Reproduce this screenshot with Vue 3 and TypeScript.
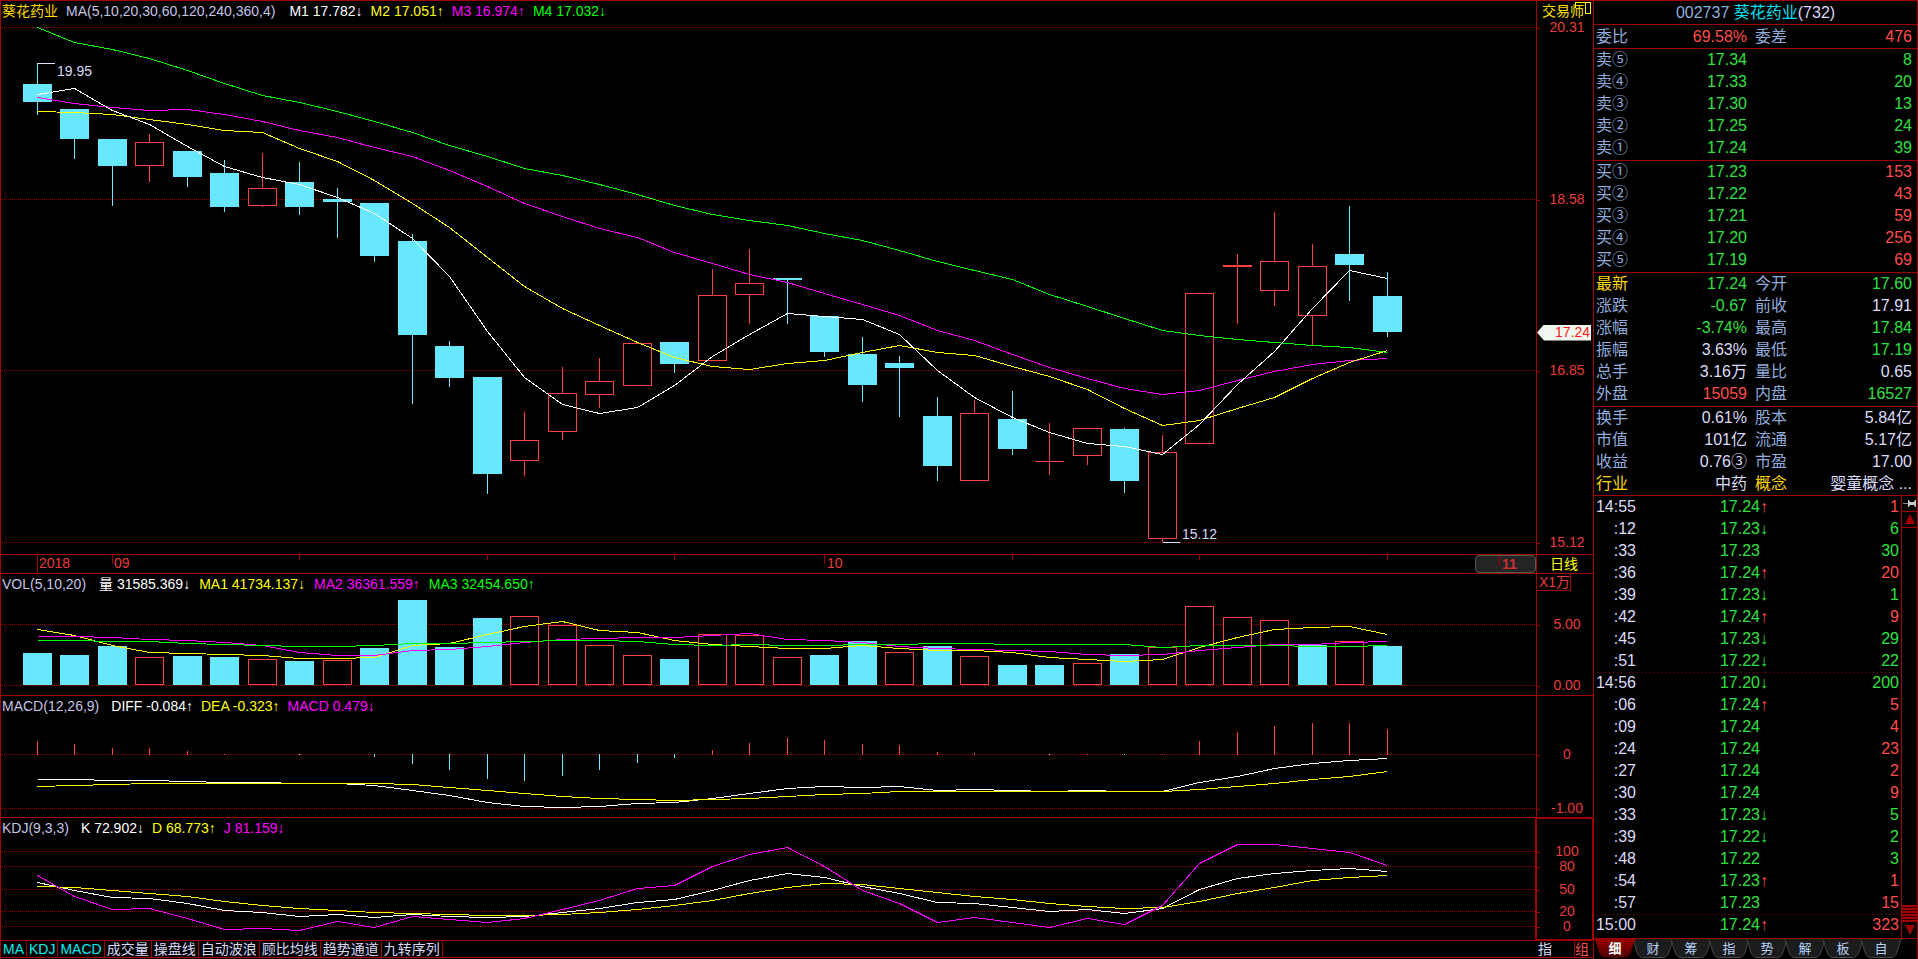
<script setup lang="ts">
type Kind = 'up' | 'down'
type Candle = [Kind, number, number, number, number]
interface Series { tone: string; ys: number[] }
interface Legend { tone: string; name: string; value: string; dir: string }
interface Tick { y: number; text: string }

const centre = (i: number): number => Math.floor(37 + 37.5 * i)

// kind, high, body top, body bottom, low
const candles: Candle[] = [
  ['down', 63, 84, 102, 115], ['down', 109, 109, 139, 159], ['down', 139, 139, 166, 206], ['up', 134, 142, 166, 182],
  ['down', 151, 151, 177, 187], ['down', 160, 173, 207, 212], ['up', 153, 188, 206, 207], ['down', 162, 182, 207, 215],
  ['down', 188, 199, 202, 238], ['down', 203, 203, 256, 262], ['down', 234, 241, 335, 404], ['down', 341, 346, 378, 387],
  ['down', 377, 377, 474, 494], ['up', 412, 440, 461, 476], ['up', 367, 393, 432, 440], ['up', 358, 381, 395, 408],
  ['up', 343, 343, 386, 386], ['down', 342, 342, 364, 373], ['up', 269, 295, 361, 361], ['up', 249, 283, 295, 324],
  ['down', 278, 278, 280, 324], ['down', 316, 316, 352, 357], ['down', 337, 354, 385, 402], ['down', 356, 363, 368, 417],
  ['down', 397, 416, 466, 481], ['up', 400, 413, 481, 481], ['down', 391, 419, 449, 455], ['up', 423, 461, 462, 475],
  ['up', 428, 428, 456, 465], ['down', 428, 429, 481, 493], ['up', 435, 452, 539, 542], ['up', 293, 293, 444, 444],
  ['up', 254, 265, 267, 324], ['up', 212, 261, 291, 306], ['up', 244, 266, 316, 345], ['down', 206, 254, 265, 301],
  ['down', 272, 296, 332, 337],
]

const priceLines: Series[] = [
  { tone: 'green', ys: [27, 42, 49, 58, 70, 83, 95, 102, 111, 121, 132, 145, 156, 168, 175, 184, 194, 205, 214, 220, 225, 233, 240, 250, 261, 270, 279, 294, 306, 318, 330, 335, 339, 342, 345, 347, 352] },
  { tone: 'magenta', ys: [97, 103, 107, 110, 109, 114, 121, 130, 137, 147, 156, 170, 186, 203, 216, 228, 237, 252, 263, 274, 282, 293, 304, 315, 330, 340, 354, 367, 378, 388, 394, 390, 380, 371, 364, 360, 358] },
  { tone: 'yellow', ys: [111, 112, 114, 119, 124, 130, 132, 148, 161, 180, 203, 227, 257, 286, 308, 325, 342, 357, 366, 369, 363, 360, 352, 345, 352, 355, 366, 376, 389, 408, 425, 420, 408, 397, 378, 362, 350] },
  { tone: 'white', ys: [94, 88, 110, 124, 146, 166, 177, 184, 197, 213, 238, 276, 331, 377, 404, 413, 407, 385, 356, 334, 313, 316, 319, 334, 370, 397, 417, 432, 443, 446, 454, 424, 384, 351, 308, 270, 278] },
]

const volumeTops = [653, 655, 646, 657, 656, 657, 659, 661, 660, 648, 600, 647, 618, 616, 625, 645, 655, 659, 634, 635, 657, 655, 641, 652, 646, 656, 665, 665, 663, 654, 647, 606, 617, 620, 645, 641, 646]
const volumeDown = [0, 1, 2, 4, 5, 7, 9, 10, 11, 12, 17, 21, 22, 24, 26, 27, 29, 34, 36]
const volumeLines: Series[] = [
  { tone: 'yellow', ys: [629, 635, 645, 652, 653, 654, 655, 658, 658, 657, 645, 643, 634, 626, 621, 630, 632, 640, 644, 646, 648, 648, 645, 648, 650, 650, 652, 657, 659, 661, 659, 647, 637, 629, 627, 626, 634] },
  { tone: 'magenta', ys: [636, 636, 637, 639, 640, 642, 645, 652, 655, 655, 650, 649, 646, 642, 639, 638, 637, 637, 635, 633, 639, 640, 642, 646, 648, 649, 650, 651, 654, 655, 654, 650, 647, 644, 644, 642, 641] },
  { tone: 'green', ys: [640, 640, 641, 641, 643, 644, 645, 646, 646, 645, 643, 643, 642, 641, 640, 640, 641, 644, 645, 644, 645, 645, 644, 644, 643, 643, 644, 644, 644, 644, 647, 645, 645, 645, 646, 646, 645] },
]

const macdZero = 754
const macdEnds = [741, 744, 748, 748, 751, 754, 0, 755, 0, 757, 764, 770, 779, 781, 776, 770, 763, 758, 750, 743, 738, 740, 744, 745, 752, 753, 0, 755, 754, 755, 754, 741, 732, 726, 723, 723, 729]
const macdLines: Series[] = [
  { tone: 'white', ys: [779, 779, 780, 780, 781, 782, 782, 783, 783, 785, 790, 795, 802, 806, 807, 806, 803, 802, 798, 793, 788, 786, 787, 786, 790, 789, 790, 791, 790, 791, 791, 782, 776, 768, 763, 760, 758] },
  { tone: 'yellow', ys: [786, 785, 784, 783, 783, 783, 783, 783, 783, 783, 784, 787, 790, 793, 796, 798, 799, 800, 799, 798, 796, 794, 793, 791, 791, 791, 791, 791, 791, 791, 791, 789, 786, 783, 779, 776, 771] },
]

const kdjLines: Series[] = [
  { tone: 'white', ys: [882, 890, 897, 898, 903, 910, 912, 916, 914, 917, 914, 916, 917, 916, 912, 908, 902, 899, 890, 880, 873, 877, 886, 893, 902, 903, 907, 911, 909, 913, 908, 889, 878, 873, 870, 868, 871] },
  { tone: 'yellow', ys: [886, 887, 890, 893, 896, 901, 905, 908, 910, 912, 913, 914, 915, 915, 914, 912, 909, 905, 900, 893, 887, 883, 884, 888, 892, 896, 899, 903, 906, 908, 907, 901, 893, 887, 880, 877, 875] },
  { tone: 'magenta', ys: [875, 896, 909, 908, 918, 929, 928, 930, 921, 927, 916, 919, 922, 918, 909, 900, 888, 885, 866, 854, 847, 866, 890, 903, 922, 917, 922, 927, 918, 924, 905, 863, 844, 844, 848, 852, 865] },
]

const points = (ys: number[]): string => ys.map((y, i) => `${centre(i) + 0.5},${y + 0.5}`).join(' ')

interface Panel { id: string; title: string; y: number; h: number; ticks: Tick[]; legend: Legend[]; lines: Series[] }
const panels: Panel[] = [
  {
    id: 'price', title: 'MA(5,10,20,30,60,120,240,360,4)', y: 1, h: 553,
    ticks: [{ y: 27, text: '20.31' }, { y: 199, text: '18.58' }, { y: 370, text: '16.85' }, { y: 542, text: '15.12' }],
    legend: [
      { tone: 'white', name: 'M1', value: '17.782', dir: '↓' }, { tone: 'yellow', name: 'M2', value: '17.051', dir: '↑' },
      { tone: 'magenta', name: 'M3', value: '16.974', dir: '↑' }, { tone: 'green', name: 'M4', value: '17.032', dir: '↓' },
    ],
    lines: priceLines,
  },
  {
    id: 'volume', title: 'VOL(5,10,20)', y: 574, h: 121,
    ticks: [{ y: 624, text: '5.00' }, { y: 685, text: '0.00' }],
    legend: [
      { tone: 'white', name: '量', value: '31585.369', dir: '↓' }, { tone: 'yellow', name: 'MA1', value: '41734.137', dir: '↓' },
      { tone: 'magenta', name: 'MA2', value: '36361.559', dir: '↑' }, { tone: 'green', name: 'MA3', value: '32454.650', dir: '↑' },
    ],
    lines: volumeLines,
  },
  {
    id: 'macd', title: 'MACD(12,26,9)', y: 696, h: 121,
    ticks: [{ y: 754, text: '0' }, { y: 808, text: '-1.00' }],
    legend: [
      { tone: 'white', name: 'DIFF', value: '-0.084', dir: '↑' }, { tone: 'yellow', name: 'DEA', value: '-0.323', dir: '↑' },
      { tone: 'magenta', name: 'MACD', value: '0.479', dir: '↓' },
    ],
    lines: macdLines,
  },
  {
    id: 'kdj', title: 'KDJ(9,3,3)', y: 818, h: 122,
    ticks: [{ y: 851, text: '100' }, { y: 866, text: '80' }, { y: 889, text: '50' }, { y: 911, text: '20' }, { y: 926, text: '0' }],
    legend: [
      { tone: 'white', name: 'K', value: '72.902', dir: '↓' }, { tone: 'yellow', name: 'D', value: '68.773', dir: '↑' },
      { tone: 'magenta', name: 'J', value: '81.159', dir: '↓' },
    ],
    lines: kdjLines,
  },
]

const plotWidth = 1535
const topPct = (p: Panel, y: number) => ({ top: `${((y + 0.5 - p.y) / p.h) * 100}%` })
const leftPct = (x: number) => ({ left: `${((x - 1) / plotWidth) * 100}%` })

const dateTicks = [
  { x: 37, size: 'full' }, { x: 112, size: 'month' }, { x: 299, size: 'week' }, { x: 487, size: 'week' }, { x: 674, size: 'week' },
  { x: 824, size: 'month' }, { x: 1012, size: 'week' }, { x: 1199, size: 'week' }, { x: 1387, size: 'week' },
]
const dateLabels = [{ x: 39, text: '2018' }, { x: 114, text: '09' }, { x: 827, text: '10' }]

const indicatorTabs = [
  { text: 'MA', on: true }, { text: 'KDJ', on: true }, { text: 'MACD', on: true }, { text: '成交量', on: false }, { text: '操盘线', on: false },
  { text: '自动波浪', on: false }, { text: '顾比均线', on: false }, { text: '趋势通道', on: false }, { text: '九转序列', on: false },
]

const asks = [['卖⑤', '17.34', '8'], ['卖④', '17.33', '20'], ['卖③', '17.30', '13'], ['卖②', '17.25', '24'], ['卖①', '17.24', '39']]
const bids = [['买①', '17.23', '153'], ['买②', '17.22', '43'], ['买③', '17.21', '59'], ['买④', '17.20', '256'], ['买⑤', '17.19', '69']]

// label, value, value tone, label, value, value tone
const quotes = [
  ['最新', '17.24', 'fall', '今开', '17.60', 'fall'],
  ['涨跌', '-0.67', 'fall', '前收', '17.91', 'flat'],
  ['涨幅', '-3.74%', 'fall', '最高', '17.84', 'fall'],
  ['振幅', '3.63%', 'flat', '最低', '17.19', 'fall'],
  ['总手', '3.16万', 'flat', '量比', '0.65', 'flat'],
  ['外盘', '15059', 'rise', '内盘', '16527', 'fall'],
]
const facts = [
  ['换手', '0.61%', 'flat', '股本', '5.84亿', 'flat'],
  ['市值', '101亿', 'flat', '流通', '5.17亿', 'flat'],
  ['收益', '0.76③', 'flat', '市盈', '17.00', 'flat'],
  ['行业', '中药', 'flat', '概念', '婴童概念 ...', 'flat'],
]
const goldLabels = ['最新', '行业', '概念']

const trades: [string, string, string, string, string][] = [
  ['14:55', '17.24', '↑', '1', 'rise'], [':12', '17.23', '↓', '6', 'fall'], [':33', '17.23', '', '30', 'fall'], [':36', '17.24', '↑', '20', 'rise'],
  [':39', '17.23', '↓', '1', 'fall'], [':42', '17.24', '↑', '9', 'rise'], [':45', '17.23', '↓', '29', 'fall'], [':51', '17.22', '↓', '22', 'fall'],
  ['14:56', '17.20', '↓', '200', 'fall'], [':06', '17.24', '↑', '5', 'rise'], [':09', '17.24', '', '4', 'rise'], [':24', '17.24', '', '23', 'rise'],
  [':27', '17.24', '', '2', 'rise'], [':30', '17.24', '', '9', 'rise'], [':33', '17.23', '↓', '5', 'fall'], [':39', '17.22', '↓', '2', 'fall'],
  [':48', '17.22', '', '3', 'fall'], [':54', '17.23', '↑', '1', 'rise'], [':57', '17.23', '', '15', 'rise'], ['15:00', '17.24', '↑', '323', 'rise'],
]
const sideTabs = ['细', '财', '筹', '指', '势', '解', '板', '自']
</script>

<template>
  <div class="terminal">
    <main class="charts">
      <template v-for="p in panels" :key="p.id">
        <section class="panel" :class="p.id">
          <div class="plot">
            <svg class="canvas" :viewBox="`1 ${p.y} ${plotWidth} ${p.h}`" preserveAspectRatio="none" aria-hidden="true">
              <line v-for="t in p.ticks" :key="t.text" class="grid" x1="2" x2="1536" :y1="t.y + 0.5" :y2="t.y + 0.5" />
              <g v-if="p.id === 'price'">
                <g v-for="(c, i) in candles" :key="i" :class="c[0]">
                  <line class="stem" :x1="centre(i) + 0.5" :x2="centre(i) + 0.5" :y1="c[1]" :y2="c[4]" />
                  <rect v-if="c[0] === 'down' || c[3] - c[2] < 3" class="solid" :x="centre(i) - 14" :y="c[2]" width="29" :height="c[3] - c[2]" />
                  <rect v-else class="hollow" :x="centre(i) - 13.5" :y="c[2] + 0.5" width="28" :height="c[3] - c[2] - 1" />
                </g>
                <line class="marker" x1="37" x2="55" y1="63.5" y2="63.5" />
                <line class="marker" x1="1163" x2="1180" y1="542.5" y2="542.5" />
              </g>
              <g v-if="p.id === 'volume'">
                <g v-for="(top, i) in volumeTops" :key="i" :class="volumeDown.includes(i) ? 'down' : 'up'">
                  <rect v-if="volumeDown.includes(i)" class="solid" :x="centre(i) - 14" :y="top" width="29" :height="685 - top" />
                  <rect v-else class="hollow" :x="centre(i) - 13.5" :y="top + 0.5" width="28" :height="684 - top" />
                </g>
              </g>
              <g v-if="p.id === 'macd'">
                <template v-for="(end, i) in macdEnds" :key="i">
                  <g v-if="end" :class="end > macdZero ? 'down' : 'up'">
                    <line class="stem" :x1="centre(i) + 0.5" :x2="centre(i) + 0.5" :y1="end > macdZero ? macdZero : macdZero + 1" :y2="end" />
                  </g>
                </template>
              </g>
              <polyline v-for="l in p.lines" :key="l.tone" class="curve" :class="l.tone" :points="points(l.ys)" />
            </svg>
            <header class="legend">
              <b v-if="p.id === 'price'" class="stock">葵花药业</b>
              <span class="title">{{ p.title }}</span>
              <span v-for="g in p.legend" :key="g.name" class="item" :class="g.tone">{{ g.name }} {{ g.value }}{{ g.dir }}</span>
            </header>
            <template v-if="p.id === 'price'">
              <span class="extreme" :style="{ ...leftPct(57), ...topPct(p, 71) }">19.95</span>
              <span class="extreme" :style="{ ...leftPct(1182), ...topPct(p, 534) }">15.12</span>
            </template>
          </div>
          <div class="axis">
            <span v-for="t in p.ticks" :key="t.text" class="tick" :style="topPct(p, t.y)">{{ t.text }}</span>
            <button v-if="p.id === 'price'" type="button" class="trader">
              交易师
              <svg class="window-icon" width="17" height="13" viewBox="0 0 17 13" aria-hidden="true">
                <path d="M.5 6V.5h15v11h-5V.5" />
              </svg>
            </button>
            <span v-if="p.id === 'price'" class="last" :style="topPct(p, 332)">17.24</span>
            <span v-if="p.id === 'volume'" class="unit">X1万</span>
          </div>
        </section>
        <section v-if="p.id === 'price'" class="dates">
          <div class="date-track">
            <i v-for="t in dateTicks" :key="t.x" class="date-tick" :class="t.size" :style="leftPct(t.x)"></i>
            <span v-for="d in dateLabels" :key="d.text" class="date-label" :style="leftPct(d.x)">{{ d.text }}</span>
            <button type="button" class="thumb"><i class="date-tick month"></i>11</button>
          </div>
          <button type="button" class="period">日线</button>
        </section>
      </template>
      <nav class="indicators">
        <button v-for="t in indicatorTabs" :key="t.text" type="button" :class="{ on: t.on }">{{ t.text }}</button>
        <span class="spacer"></span>
        <button type="button" class="plain">指</button>
        <button type="button" class="group">组</button>
      </nav>
    </main>

    <aside class="side">
      <h1 class="heading"><span class="code">002737</span> <span class="name">葵花药业</span><span class="count">(732)</span></h1>
      <table class="sheet">
        <colgroup><col class="c-label"><col class="c-value"><col class="c-label2"><col></colgroup>
        <tbody>
          <tr><th>委比</th><td class="rise">69.58%</td><th>委差</th><td class="rise">476</td></tr>
        </tbody>
        <tbody>
          <tr v-for="r in asks" :key="r[0]"><th>{{ r[0] }}</th><td class="fall">{{ r[1] }}</td><td colspan="2" class="fall">{{ r[2] }}</td></tr>
        </tbody>
        <tbody>
          <tr v-for="r in bids" :key="r[0]"><th>{{ r[0] }}</th><td class="fall">{{ r[1] }}</td><td colspan="2" class="rise">{{ r[2] }}</td></tr>
        </tbody>
        <tbody v-for="(block, b) in [quotes, facts]" :key="b">
          <tr v-for="r in block" :key="r[0]">
            <th :class="{ gold: goldLabels.includes(r[0]) }">{{ r[0] }}</th><td :class="r[2]">{{ r[1] }}</td>
            <th :class="{ gold: goldLabels.includes(r[3]) }">{{ r[3] }}</th><td :class="r[5]">{{ r[4] }}</td>
          </tr>
        </tbody>
      </table>
      <div class="tape">
        <table class="trades">
          <colgroup><col class="t-time"><col class="t-price"><col class="t-dir"><col></colgroup>
          <tbody>
            <tr v-for="(t, i) in trades" :key="i" :class="{ minute: i > 0 && t[0].length === 5 }">
              <td class="flat">{{ t[0] }}</td><td class="fall">{{ t[1] }}</td>
              <td class="dir" :class="t[2] === '↑' ? 'rise' : 'fall'">{{ t[2] }}</td><td :class="t[4]">{{ t[3] }}</td>
            </tr>
          </tbody>
        </table>
        <div class="scroller">
          <button type="button" class="pin" aria-label="固定">
            <svg width="14" height="9" viewBox="0 0 14 9"><path d="M0 4h5v1H0z" fill="#888" /><path d="M5 1h1l1 2h4l1-2h1v7h-1l-1-2H7L6 8H5z" fill="#ccc" /></svg>
          </button>
          <button type="button" class="step" aria-label="向上">
            <svg width="10" height="10" viewBox="0 0 10 10"><path d="M5 0L10 10H0z" fill="#a00000" /></svg>
          </button>
          <div class="rail"><i class="grip"></i></div>
          <button type="button" class="step end" aria-label="向下">
            <svg width="10" height="10" viewBox="0 0 10 10"><path d="M0 0H10L5 10z" fill="#a00000" /></svg>
          </button>
        </div>
      </div>
      <nav class="side-tabs">
        <button v-for="(t, i) in sideTabs" :key="t" type="button" :class="{ on: i === 0 }">
          <svg width="42" height="19" viewBox="0 0 42 19" aria-hidden="true">
            <defs><linearGradient id="tab-red" x1="0" y1="0" x2="0" y2="1"><stop offset="0" stop-color="#980000" /><stop offset="1" stop-color="#4c0000" /></linearGradient></defs>
            <path d="M0 0C4 3 3 17 10 18.500H32C39 17 38 3 42 0" />
          </svg>
          <span>{{ t }}</span>
        </button>
      </nav>
    </aside>
  </div>
</template>

<style>
body { margin: 0; background: #000; }
</style>

<style scoped>
.terminal {
  --line: #a00000;
  display: grid;
  grid-template-columns: minmax(0, 1fr) 325px;
  height: 100vh;
  min-height: 780px;
  background: #000;
  color: #d8d8f8;
  font: 14px/18px "Liberation Sans", "Noto Sans CJK SC", sans-serif;
  overflow: hidden;
}
.terminal *, .terminal *::before { box-sizing: border-box; }
button { margin: 0; padding: 0; border: 0; background: none; color: inherit; font: inherit; cursor: pointer; }

.charts {
  display: grid;
  grid-template-rows: minmax(0, 554fr) 19px minmax(0, 122fr) minmax(0, 122fr) minmax(0, 123fr) 19px;
  border-left: 1px solid var(--line);
}
.panel, .dates { display: grid; grid-template-columns: minmax(0, 1fr) 57px; border-top: 1px solid var(--line); min-height: 0; }
.plot { position: relative; display: grid; min-height: 0; min-width: 0; }
.canvas { grid-area: 1 / 1; width: 100%; height: 100%; min-height: 0; shape-rendering: crispEdges; }
.legend { grid-area: 1 / 1; align-self: start; z-index: 1; display: flex; gap: 8px; padding: 1px; white-space: nowrap; }
.stock { font-weight: 400; color: #ffd800; }
.title { color: #c4c4e4; margin-right: 4px; }
.price .title { margin-right: 6px; }
.volume .legend { gap: 9px; }
.item.white { color: #fff; }
.item.yellow { color: #ff0; }
.item.magenta { color: #f0f; }
.item.green { color: #0f0; }

.grid { stroke: #a00000; stroke-dasharray: 1 1; vector-effect: non-scaling-stroke; }
.stem { stroke-width: 1; vector-effect: non-scaling-stroke; }
.up .stem { stroke: #ff4040; }
.down .stem { stroke: #68e8ff; }
.down .solid { fill: #68e8ff; }
.up .solid { fill: #ff4040; }
.hollow { fill: #000; stroke: #ff4040; vector-effect: non-scaling-stroke; }
.marker { stroke: #e0e0ff; vector-effect: non-scaling-stroke; }
.curve { fill: none; stroke-width: 1; vector-effect: non-scaling-stroke; }
.curve.white { stroke: #fff; }
.curve.yellow { stroke: #ff0; }
.curve.magenta { stroke: #f0f; }
.curve.green { stroke: #0f0; }
.extreme { position: absolute; padding-bottom: 2px; transform: translateY(-50%); }

.axis { position: relative; border-left: 1px solid var(--line); color: #e83c3c; }
.tick { position: absolute; left: 0; right: 0; padding: 0 0 2px 4px; text-align: center; transform: translateY(-50%); }
.tick::before { content: ""; position: absolute; left: 0; top: 50%; width: 3px; height: 1px; background: var(--line); }
.kdj .axis { outline: 2px solid var(--line); outline-offset: -1px; }
.trader { display: flex; position: relative; padding: 1px 0 0 5px; color: #ffe000; }
.window-icon { position: absolute; top: 1px; left: 38px; fill: none; stroke: #ff0; shape-rendering: crispEdges; }
.last {
  position: absolute; left: 0; right: 2px; padding-right: 1px; height: 16px; line-height: 15px; text-align: right;
  background: #f0f8f0; color: #ff1818; transform: translateY(-50%);
  clip-path: polygon(0 50%, 7px 0, 100% 0, 100% 100%, 7px 100%);
}
.unit { display: block; width: 34px; height: 17px; line-height: 16px; padding-left: 2px; border: solid var(--line); border-width: 0 1px 1px 0; white-space: nowrap; }

.date-track { position: relative; color: #e83c3c; line-height: 16px; }
.date-tick { position: absolute; top: 0; width: 1px; background: var(--line); }
.date-tick.full { height: 18px; }
.date-tick.month { height: 9px; }
.date-tick.week { height: 5px; }
.date-label { position: absolute; top: 0; }
.thumb { position: absolute; right: 0; top: 0; width: 61px; height: 18px; padding-left: 26px; text-align: left; background: #242424; border: 1px solid #585858; border-radius: 4px; line-height: 15px; font-weight: 700; color: #c83232; }
.thumb .date-tick { left: 23px; }
.period { border-left: 1px solid var(--line); color: #ff0; padding-right: 2px; }

.indicators { display: flex; height: 18px; border: solid var(--line); border-width: 1px 0; line-height: 16px; overflow: hidden; }
.indicators button { padding: 0 2px; border-right: 1px solid var(--line); white-space: nowrap; line-height: 16px; }
.indicators .on { color: #00f0f0; }
.spacer { flex: 1; }
.indicators .plain { border: 0; padding: 0 22px 0 0; }
.indicators .group { border-right: 0; border-left: 1px solid var(--line); padding: 0 4px 0 0; color: #f05050; }

.side {
  display: flex; flex-direction: column; min-height: 0;
  border: solid var(--line); border-width: 1px 1px 0 1px;
  font-size: 16px; line-height: 22px;
}
.heading { margin: 0; font-size: 16px; font-weight: 400; line-height: 23px; text-align: center; }
.code, .sheet th { color: #90acdc; }
.name { color: #00e0f0; }
.sheet { table-layout: fixed; width: 100%; border-collapse: collapse; }
.c-label { width: 34px; }
.c-value { width: 119px; }
.c-label2 { width: 40px; }
.sheet tr { height: 22px; }
.sheet th, .sheet td, .trades td { padding: 0; font-weight: 400; text-align: right; white-space: nowrap; line-height: 21px; height: 22px; }
.sheet th { text-align: left; padding-left: 2px; }
.sheet th:nth-child(3) { padding-left: 8px; }
.sheet td:last-child { padding-right: 5px; }
.sheet tbody { border-top: 1px solid var(--line); }
.sheet tbody:not(:last-child) tr:last-child > * { height: 24px; padding-bottom: 1px; }
.sheet th.gold { color: #ffd800; }
.rise { color: #ff4c4c; }
.fall { color: #30e040; }
.flat { color: #dcdcf8; }

.tape { flex: 1; display: grid; grid-template-columns: minmax(0, 1fr) 16px; min-height: 0; border: solid var(--line); border-width: 1px 0; overflow: hidden; }
.trades { align-self: start; table-layout: fixed; width: 100%; border-collapse: collapse; }
.t-time { width: 42px; }
.t-price { width: 124px; }
.t-dir { width: 10px; }
.trades td:last-child { padding-right: 2px; }
.trades .dir { text-align: left; }
.minute { background: repeating-linear-gradient(90deg, #a00000 0 1px, transparent 1px 4px) 3px 0 / 301px 1px no-repeat; }
.scroller { display: flex; flex-direction: column; border-left: 1px solid var(--line); min-height: 0; }
.scroller button { display: grid; place-items: center; height: 16px; flex: none; border-bottom: 1px solid var(--line); }
.scroller .end { border-bottom: 0; }
.rail { flex: 1; display: flex; align-items: flex-end; min-height: 0; }
.grip { width: 100%; height: 17px; background: repeating-linear-gradient(#a00000 0 2px, #300000 2px 3px); }

.side-tabs { display: flex; height: 20px; }
.side-tabs button { position: relative; display: grid; place-items: center; width: 42px; height: 19px; margin-right: -4px; color: #b4d0f8; font-size: 13px; line-height: 18px; }
.side-tabs svg { grid-area: 1 / 1; }
.side-tabs span { grid-area: 1 / 1; z-index: 1; }
.side-tabs path { fill: #1c1c1c; stroke: #484848; }
.side-tabs .on { z-index: 1; color: #fff; font-weight: 700; }
.side-tabs .on path { fill: url(#tab-red); stroke: none; }
</style>
